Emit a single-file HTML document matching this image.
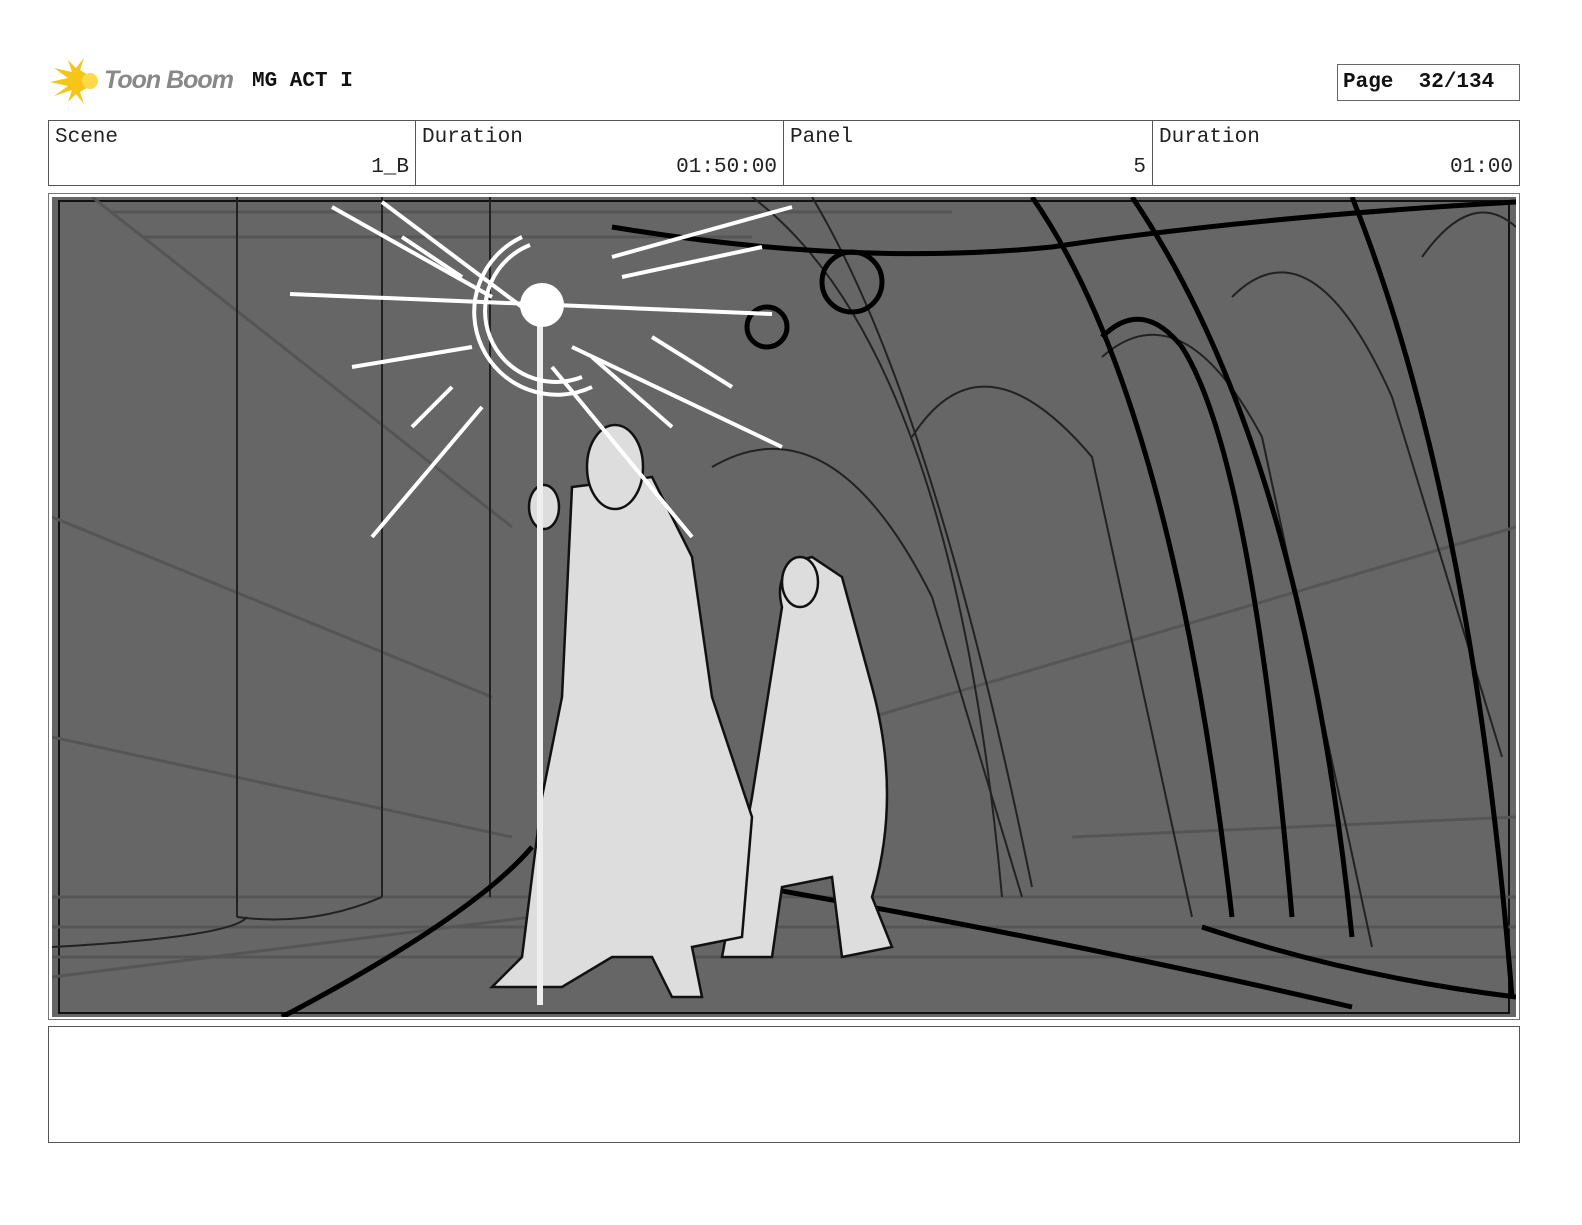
<!DOCTYPE html>
<html><head><meta charset="utf-8"><style>
body{margin:0;background:#fff;width:1582px;height:1225px;position:relative;overflow:hidden;font-family:"Liberation Mono",monospace;}
.abs{position:absolute}
.cell{position:absolute;top:120px;height:66px;border:1px solid #555;box-sizing:border-box;font-size:21px;color:#222}
.cell .l{position:absolute;left:6px;top:5px}
.cell .r{position:absolute;right:6px;top:35px}
</style></head><body>
<svg class="abs" style="left:50px;top:56px" width="52" height="50" viewBox="0 0 52 50">
<g fill="#f5c518">
<path d="M48 25 L30 14 L34 2 L26 12 L18 4 L22 16 L4 12 L18 22 L0 26 L18 30 L4 40 L22 34 L18 46 L26 38 L34 48 L30 36 Z"/>
</g><circle cx="40" cy="25" r="8" fill="#ffd94a"/></svg>
<div class="abs" style="left:104px;top:66px;font-family:'Liberation Sans',sans-serif;font-style:italic;font-weight:bold;font-size:25px;color:#888;letter-spacing:-1px">Toon Boom</div>
<div class="abs" style="left:252px;top:70px;font-weight:bold;font-size:21px;color:#111">MG ACT I</div>
<div class="abs" style="left:1337px;top:64px;width:183px;height:37px;border:1px solid #666;box-sizing:border-box;font-weight:bold;font-size:21px;padding:6px 0 0 5px;color:#111;white-space:pre">Page  32/134</div>
<div class="cell" style="left:48px;width:368px"><span class="l">Scene</span><span class="r">1_B</span></div>
<div class="cell" style="left:415px;width:369px"><span class="l">Duration</span><span class="r">01:50:00</span></div>
<div class="cell" style="left:783px;width:370px"><span class="l">Panel</span><span class="r">5</span></div>
<div class="cell" style="left:1152px;width:368px"><span class="l">Duration</span><span class="r">01:00</span></div>
<div class="abs" style="left:48px;top:193px;width:1472px;height:827px;border:1px solid #777;box-sizing:border-box"></div>
<svg class="abs" style="left:52px;top:197px" width="1464" height="820" viewBox="0 0 1464 820">
<rect width="1464" height="820" fill="#666"/>
<rect x="7" y="4" width="1450" height="812" fill="none" stroke="#111" stroke-width="2"/>
<g stroke="#555" stroke-width="3" fill="none">
<path d="M40 0 L460 330"/><path d="M0 320 L440 500"/><path d="M0 540 L460 640"/><path d="M0 780 L480 720"/>
<path d="M1464 330 L820 520"/><path d="M1464 620 L1020 640"/><path d="M60 15 H900"/><path d="M90 40 H700"/>
<path d="M0 700 H1464"/><path d="M0 730 H1464"/><path d="M0 760 H1464"/>
</g>
<g stroke="#222" stroke-width="2" fill="none">
<path d="M185 0 V720"/><path d="M330 0 V700"/><path d="M438 0 V700"/>
<path d="M0 750 Q180 740 195 720"/><path d="M185 720 Q260 730 330 700"/>
<path d="M660 270 Q780 200 880 400 L970 700"/><path d="M860 240 Q930 130 1040 260 L1140 720"/>
<path d="M1050 160 Q1130 90 1210 240 L1320 750"/><path d="M1180 100 Q1260 20 1340 200 L1450 560"/>
<path d="M700 0 Q900 150 950 700"/><path d="M760 0 Q880 200 980 690"/>
<path d="M1370 60 Q1420 -10 1464 30"/>
</g>
<g stroke="#000" stroke-width="5" fill="none">
<path d="M560 30 Q800 70 1000 50 Q1200 20 1464 5"/><path d="M980 0 Q1120 200 1180 720"/>
<path d="M1080 0 Q1250 250 1300 740"/><path d="M1300 0 Q1420 300 1460 800"/>
<path d="M1050 140 Q1090 100 1130 150 Q1200 260 1240 720"/>
<path d="M230 820 Q420 720 480 650"/><path d="M650 680 Q1000 740 1300 810"/>
<path d="M1150 730 Q1300 780 1464 800"/>
<circle cx="800" cy="85" r="30"/><circle cx="715" cy="130" r="20"/>
</g>
<g fill="#ddd" stroke="#111" stroke-width="2.5">
<path d="M700 600 L730 410 Q720 370 760 360 L790 380 L820 490 Q850 600 820 700 L840 750 L790 760 L780 680 L730 690 L720 760 L670 760 Z"/>
<ellipse cx="748" cy="385" rx="18" ry="25"/>
<path d="M520 290 L600 280 L640 360 L660 500 L700 620 L690 740 L640 750 L650 800 L620 800 L600 760 L560 760 L510 790 L440 790 L470 760 L490 600 L510 500 Z"/>
<ellipse cx="563" cy="270" rx="28" ry="42"/>
<ellipse cx="492" cy="310" rx="15" ry="22"/>
</g>
<g stroke="#eee" stroke-width="6" fill="none">
<path d="M488 100 V808"/>
</g>
<g stroke="#fff" stroke-width="4" fill="none">
<path d="M470 40 A70 70 0 1 0 540 190"/><path d="M478 48 A60 60 0 1 0 530 180"/><path d="M238 97 L720 117"/>
<path d="M280 10 L440 100"/><path d="M330 5 L470 110"/><path d="M520 150 L730 250"/><path d="M500 170 L640 340"/>
<path d="M320 340 L430 210"/><path d="M300 170 L420 150"/><path d="M560 60 L740 10"/><path d="M570 80 L710 50"/>
<path d="M350 40 L410 80"/><path d="M360 230 L400 190"/><path d="M540 160 L620 230"/><path d="M600 140 L680 190"/>
</g>
<circle cx="490" cy="108" r="22" fill="#fff"/>
</svg>
<div class="abs" style="left:48px;top:1026px;width:1472px;height:117px;border:1px solid #555;box-sizing:border-box"></div>
</body></html>
